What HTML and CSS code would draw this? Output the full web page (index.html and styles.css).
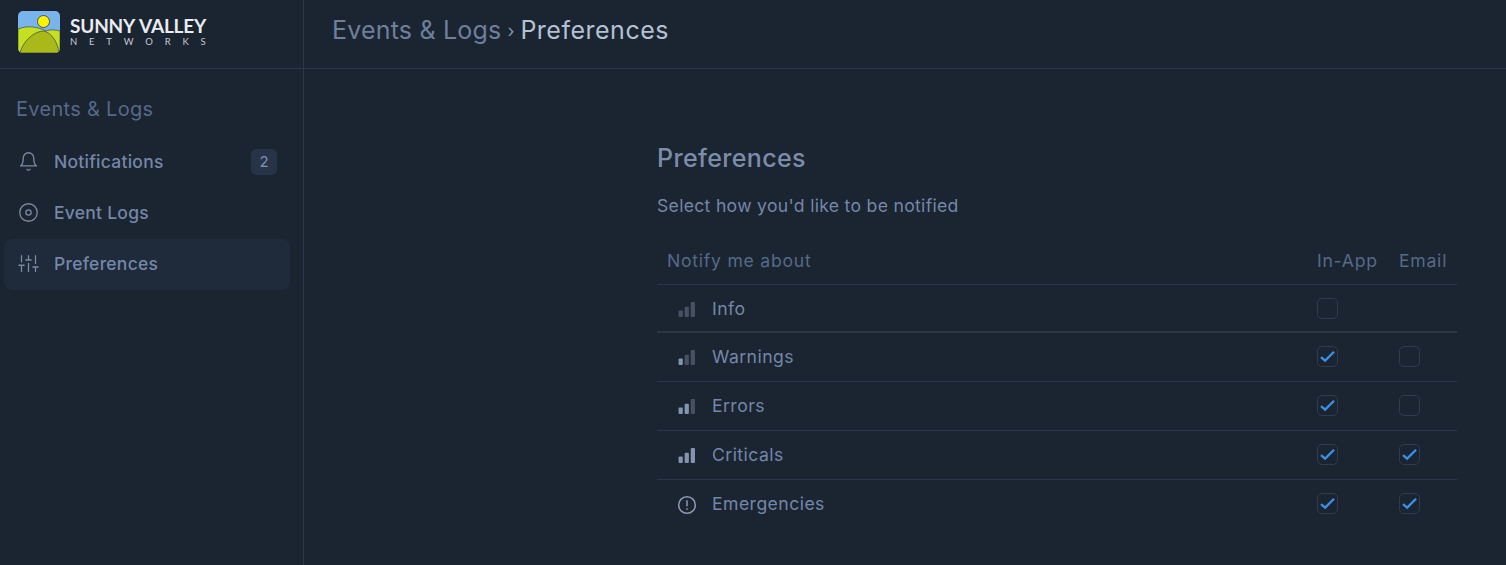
FILE: index.html
```html
<!DOCTYPE html>
<html lang="en">
<head>
<meta charset="utf-8">
<title>Preferences</title>
<link rel="stylesheet" href="styles.css">
</head>
<body>
<div class="app">
  <header class="topbar">
    <div class="brand">
      <svg class="logo" viewBox="0 0 42 42" width="42" height="42">
        <defs><clipPath id="lc"><rect width="42" height="42" rx="5"/></clipPath></defs>
        <g clip-path="url(#lc)">
          <rect width="42" height="42" fill="#7ab4ec"/>
          <path d="M0 18C10 14 20 16 28 20C33 18 38 19 42 20V42H0Z" fill="#c6e020" stroke="#2f4a5c" stroke-width=".7"/>
          <path d="M2 42C5 30 16 20 26 20C34 22 40 32 41 42Z" fill="#abb918" stroke="#2f4a5c" stroke-width=".7"/>
          <circle cx="25.500" cy="10.500" r="6" fill="#fff200" stroke="#2b3a44" stroke-width=".8"/>
        </g>
      </svg>
      <div class="wordmark">
        <span class="wm-top">SUNNY VALLEY</span>
        <span class="wm-bottom">NETWORKS</span>
      </div>
    </div>
    <div class="crumbs">
      <span class="crumb-parent">Events &amp; Logs</span>
      <span class="crumb-sep">›</span>
      <span class="crumb-current">Preferences</span>
    </div>
  </header>
  <div class="main">
    <aside class="sidebar">
      <div class="side-title">Events &amp; Logs</div>
      <nav class="nav">
        <a class="nav-item">
          <svg class="nav-icon" viewBox="0 0 24 24"><path d="M18 8a6 6 0 0 0-12 0c0 7-3 9-3 9h18s-3-2-3-9"/><path d="M13.700 21a2 2 0 0 1-3.400 0"/></svg>
          <span class="nav-label">Notifications</span>
          <span class="badge">2</span>
        </a>
        <a class="nav-item">
          <svg class="nav-icon" viewBox="0 0 24 24"><circle cx="12" cy="12" r="10"/><circle cx="12" cy="12" r="3"/></svg>
          <span class="nav-label">Event Logs</span>
        </a>
        <a class="nav-item active">
          <svg class="nav-icon" viewBox="0 0 24 24"><path d="M4 21v-7M4 10V3M12 21v-9M12 8V3M20 21v-5M20 12V3M1 14h6M9 8h6M17 16h6"/></svg>
          <span class="nav-label">Preferences</span>
        </a>
      </nav>
    </aside>
    <section class="content">
      <div class="panel">
        <h1 class="title">Preferences</h1>
        <p class="subtitle">Select how you'd like to be notified</p>
        <div class="thead">
          <span class="th-name">Notify me about</span>
          <span class="col-a">In-App</span>
          <span class="col-b">Email</span>
        </div>
        <div class="row thick">
          <span class="sev"><svg class="bars" viewBox="0 0 18 16"><rect x="0" y="9" width="4.500" height="7" rx="1" class="off"/><rect x="6.500" y="5" width="4.500" height="11" rx="1" class="off"/><rect x="13" y="0" width="4.500" height="16" rx="1" class="off"/></svg></span>
          <span class="name">Info</span>
          <span class="col-a"><span class="check"></span></span>
          <span class="col-b"></span>
        </div>
        <div class="row">
          <span class="sev"><svg class="bars" viewBox="0 0 18 16"><rect x="0" y="9" width="4.500" height="7" rx="1" class="on"/><rect x="6.500" y="5" width="4.500" height="11" rx="1" class="off"/><rect x="13" y="0" width="4.500" height="16" rx="1" class="off"/></svg></span>
          <span class="name">Warnings</span>
          <span class="col-a"><span class="check"><svg viewBox="0 0 16 16"><path d="M2.500 8.500 6 11.500 13.500 4"/></svg></span></span>
          <span class="col-b"><span class="check"></span></span>
        </div>
        <div class="row">
          <span class="sev"><svg class="bars" viewBox="0 0 18 16"><rect x="0" y="9" width="4.500" height="7" rx="1" class="on"/><rect x="6.500" y="5" width="4.500" height="11" rx="1" class="on"/><rect x="13" y="0" width="4.500" height="16" rx="1" class="off"/></svg></span>
          <span class="name">Errors</span>
          <span class="col-a"><span class="check"><svg viewBox="0 0 16 16"><path d="M2.500 8.500 6 11.500 13.500 4"/></svg></span></span>
          <span class="col-b"><span class="check"></span></span>
        </div>
        <div class="row">
          <span class="sev"><svg class="bars" viewBox="0 0 18 16"><rect x="0" y="9" width="4.500" height="7" rx="1" class="on"/><rect x="6.500" y="5" width="4.500" height="11" rx="1" class="on"/><rect x="13" y="0" width="4.500" height="16" rx="1" class="on"/></svg></span>
          <span class="name">Criticals</span>
          <span class="col-a"><span class="check"><svg viewBox="0 0 16 16"><path d="M2.500 8.500 6 11.500 13.500 4"/></svg></span></span>
          <span class="col-b"><span class="check"><svg viewBox="0 0 16 16"><path d="M2.500 8.500 6 11.500 13.500 4"/></svg></span></span>
        </div>
        <div class="row last">
          <span class="sev"><svg class="alert" viewBox="0 0 24 24"><circle cx="12" cy="12" r="10"/><path d="M12 7v6M12 16.500v.5"/></svg></span>
          <span class="name">Emergencies</span>
          <span class="col-a"><span class="check"><svg viewBox="0 0 16 16"><path d="M2.500 8.500 6 11.500 13.500 4"/></svg></span></span>
          <span class="col-b"><span class="check"><svg viewBox="0 0 16 16"><path d="M2.500 8.500 6 11.500 13.500 4"/></svg></span></span>
        </div>
      </div>
    </section>
  </div>
</div>
</body>
</html>
```
FILE: styles.css
```css
* { box-sizing: border-box; }
html, body { margin: 0; height: 100%; }
body {
  background: #1b2431;
  color: #7487a8;
  font-family: "Inter", "Liberation Sans", sans-serif;
  overflow: hidden;
}
.app { display: flex; flex-direction: column; height: 565px; }

.topbar { display: flex; height: 69px; border-bottom: 1px solid #2b3648; flex: none; }
.brand {
  width: 304px;
  flex: none;
  display: flex;
  align-items: center;
  gap: 10px;
  padding: 0 0 4px 18px;
  border-right: 1px solid #2b3648;
}
.logo { flex: none; display: block; }
.wordmark { display: flex; flex-direction: column; margin-bottom: 2px; }
.wm-top { color: #e9ecef; font-family: "Lato", sans-serif; font-weight: 700; font-size: 19px; line-height: 20px; white-space: nowrap; word-spacing: 1px; letter-spacing: -.2px; }
.wm-bottom { color: #c5cad2; font-family: "Lato", sans-serif; font-weight: 400; font-size: 9.500px; line-height: 11px; letter-spacing: 11.800px; white-space: nowrap; }

.crumbs { display: flex; align-items: center; gap: 6px; padding: 0 0 8px 28px; font-size: 25px; }
.crumb-parent { color: #6d7f9c; letter-spacing: .2px; }
.crumb-sep { color: #8494ad; font-size: 18px; }
.crumb-current { color: #b4c0d4; letter-spacing: .5px; }

.main { flex: 1; display: flex; min-height: 0; }
.sidebar { width: 304px; flex: none; border-right: 1px solid #2b3648; padding: 27px 13px 0 4px; }
.side-title { color: #56698a; font-size: 20px; line-height: 26px; padding-left: 12px; margin-bottom: 14px; letter-spacing: .3px; }
.nav { display: flex; flex-direction: column; gap: .5px; }
.nav-item { display: flex; align-items: center; height: 51px; padding: 0 13px 1px 14px; border-radius: 8px; font-weight: 500; font-size: 17.500px; color: #7487a8; }
.nav-item.active { background: #1f2a3a; padding-bottom: 2px; }
.nav-icon { width: 21px; height: 21px; fill: none; stroke: #7b8aa3; stroke-width: 1.500; stroke-linecap: round; stroke-linejoin: round; margin-right: 15px; flex: none; }
.nav-label { flex: 1; letter-spacing: .25px; }
.badge { width: 26px; height: 26px; margin-top: 1px; border-radius: 5px; background: #273347; color: #7f92b0; font-size: 15px; display: flex; align-items: center; justify-content: center; font-weight: 400; }

.content { flex: 1; display: flex; justify-content: flex-end; padding: 69px 49px 0 0; }
.panel { width: 800px; }
.title { margin: 0; font-size: 25px; line-height: 40px; font-weight: 500; color: #7c8dab; letter-spacing: .35px; }
.subtitle { margin: 15px 0 0; font-size: 17.600px; line-height: 26px; color: #7487a8; letter-spacing: .3px; }
.thead, .row { display: grid; grid-template-columns: 1fr 82px 48px; }
.thead { height: 46px; align-items: center; padding: 0 10px 2px 10px; margin-top: 20px; border-bottom: 1px solid #2b3648; font-size: 17.600px; color: #56698a; letter-spacing: .75px; }
.row { grid-template-columns: 55px 1fr 82px 48px; height: 49px; align-items: center; padding: 0 10px 2px 0; border-bottom: 1px solid #2b3648; font-size: 17.600px; color: #7487a8; }
.row.thick { height: 48px; padding-bottom: 0; border-bottom-width: 2px; }
.row.last { border-bottom: 0; padding-bottom: 3px; }
.sev { display: flex; padding-left: 21px; }
.name { letter-spacing: .45px; }
.bars { width: 18px; height: 15px; margin-top: 2px; display: block; }
.bars .off { fill: #465164; }
.bars .on { fill: #8394b0; }
.alert { width: 20px; height: 20px; fill: none; stroke: #8c9ab2; stroke-width: 1.800; stroke-linecap: round; display: block; margin: 3px 0 0 -1px; }
.check { display: block; width: 21px; height: 21px; border: 1px solid #2f3b4e; border-radius: 5px; }
.check svg { display: block; width: 19px; height: 19px; fill: none; stroke: #3a90e6; stroke-width: 2; }
```
